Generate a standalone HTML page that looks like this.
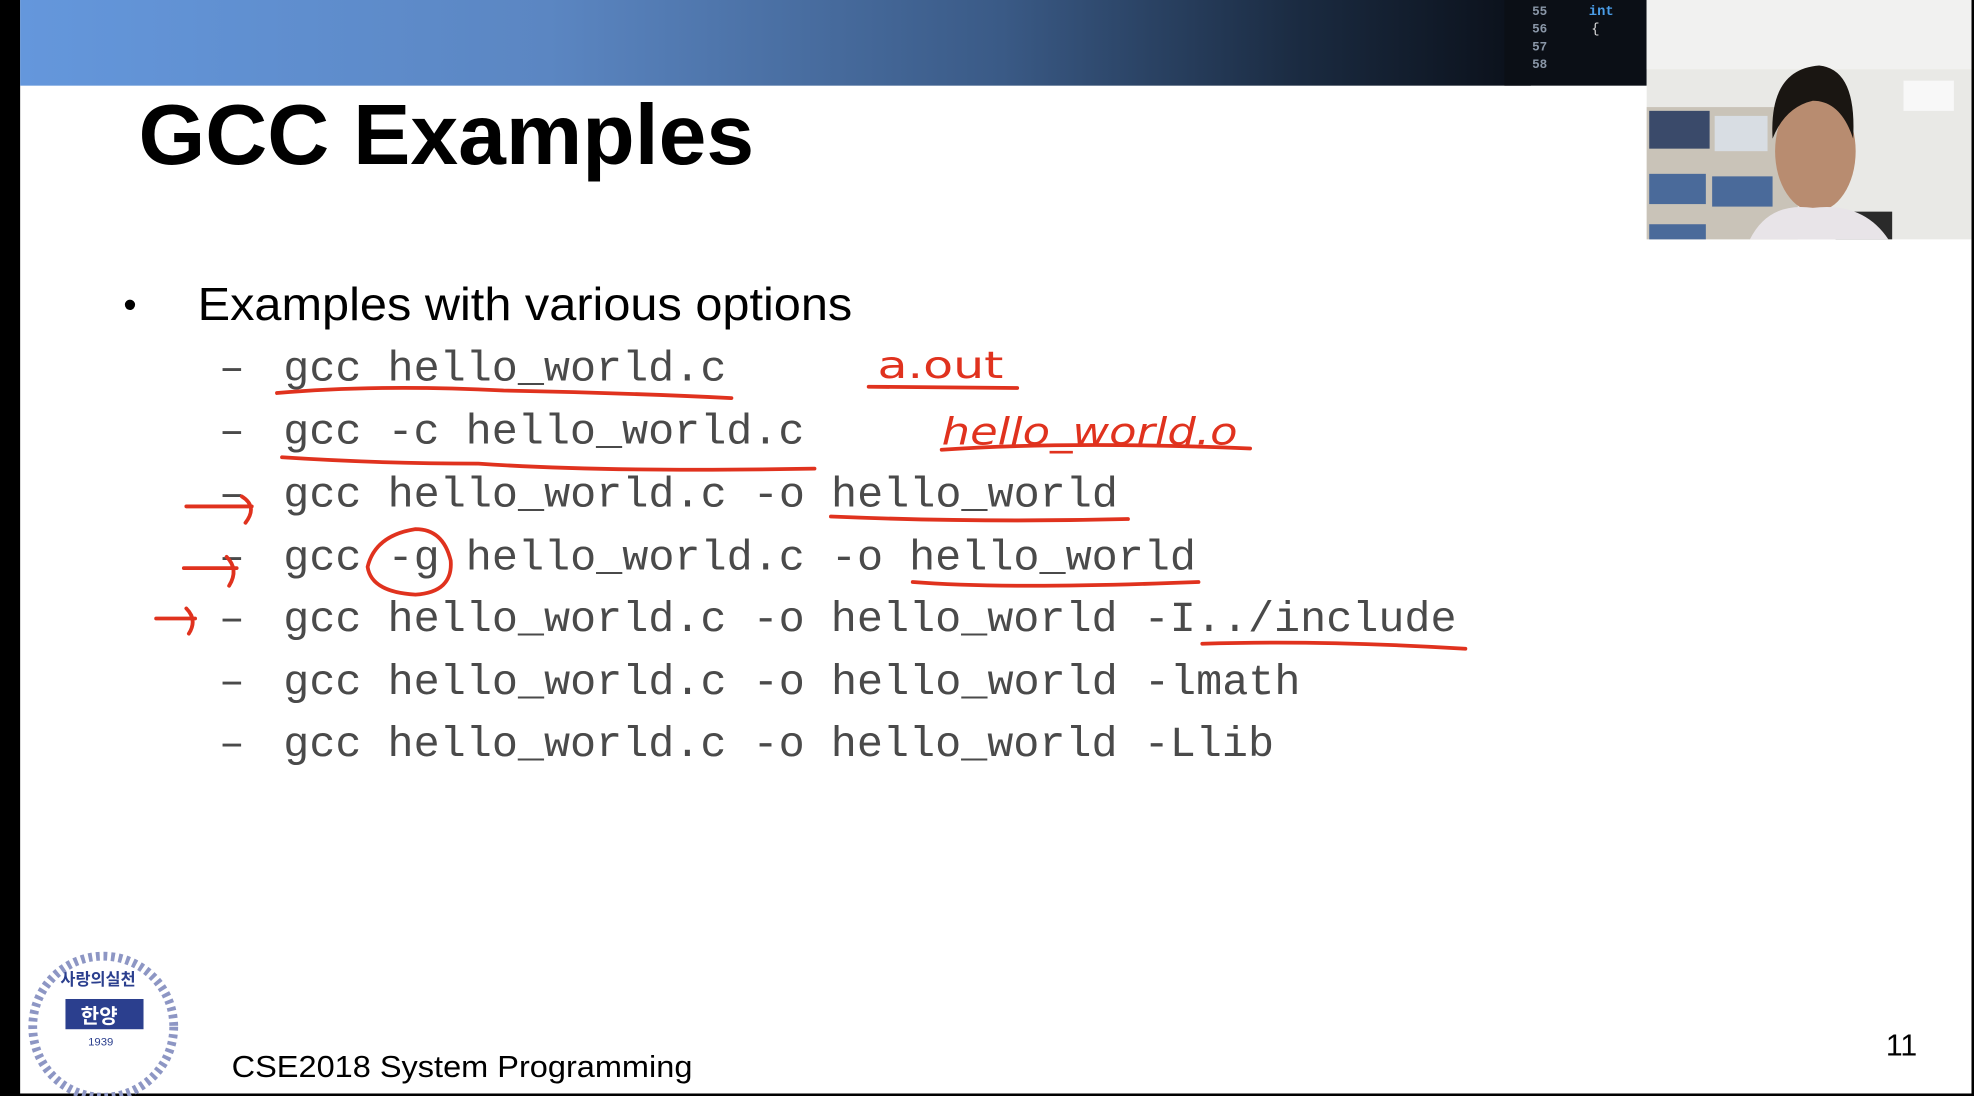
<!DOCTYPE html>
<html><head><meta charset="utf-8"><style>
html,body{margin:0;padding:0;background:#000;}
svg{display:block;}
</style></head><body>
<svg width="1974" height="1096" viewBox="0 0 1568 870" preserveAspectRatio="none" xmlns="http://www.w3.org/2000/svg">
<defs>
<linearGradient id="bar" x1="0" x2="1" y1="0" y2="0">
<stop offset="0" stop-color="#6497dc"/>
<stop offset="0.35" stop-color="#5b86c2"/>
<stop offset="0.65" stop-color="#3a5a86"/>
<stop offset="0.85" stop-color="#1a2a40"/>
<stop offset="1" stop-color="#0a0f18"/>
</linearGradient>
</defs>
<rect x="0" y="0" width="1568" height="870" fill="#000"/>
<rect x="16" y="0" width="1550" height="868" fill="#fff"/>
<rect x="16" y="0" width="1200" height="68" fill="url(#bar)"/>
<rect x="1195" y="0" width="113" height="68" fill="#0b0f16"/>
<g font-family="Liberation Mono, monospace" font-size="10" font-weight="bold" fill="#8a97a8">
<text x="1217" y="12">55</text><text x="1217" y="26">56</text><text x="1217" y="40">57</text><text x="1217" y="54">58</text>
</g>
<text x="1262" y="12" font-family="Liberation Mono, monospace" font-size="11" font-weight="bold" fill="#4a9de8">int</text>
<text x="1264" y="26" font-family="Liberation Mono, monospace" font-size="11" fill="#ddd">{</text>
<!-- webcam -->
<rect x="1308" y="0" width="258" height="190" fill="#e9e9e6"/>
<rect x="1308" y="0" width="258" height="55" fill="#f1f1f0"/>
<rect x="1308" y="85" width="120" height="105" fill="#c9c3b8"/>
<rect x="1310" y="88" width="48" height="30" fill="#3a4a6a"/>
<rect x="1310" y="138" width="45" height="24" fill="#4a6a9a"/>
<rect x="1360" y="140" width="48" height="24" fill="#4a6a9a"/>
<rect x="1310" y="178" width="45" height="12" fill="#4a6a9a"/>
<rect x="1362" y="92" width="42" height="28" fill="#d8dde3"/>
<rect x="1512" y="64" width="40" height="24" fill="#f8f8f8"/>
<rect x="1458" y="168" width="45" height="22" fill="#2a2a2a"/>
<ellipse cx="1442" cy="120" rx="32" ry="48" fill="#b88c70"/>
<path d="M1408 110 Q1405 55 1445 52 Q1475 55 1472 110 Q1462 80 1440 80 Q1418 85 1408 110Z" fill="#1a1612"/>
<path d="M1390 190 Q1405 160 1440 165 Q1480 160 1500 190Z" fill="#e8e4e8"/>
<!-- title -->
<text x="110" y="130" font-family="Liberation Sans, Arial, sans-serif" font-size="68" font-weight="bold" fill="#000" textLength="489" lengthAdjust="spacingAndGlyphs">GCC Examples</text>
<text x="98" y="252" font-family="Liberation Sans, Arial, sans-serif" font-size="30" fill="#000">•</text>
<text x="157" y="254" font-family="Liberation Sans, Arial, sans-serif" font-size="37" fill="#000" textLength="520" lengthAdjust="spacingAndGlyphs">Examples with various options</text>
<g font-family="Liberation Mono, Courier New, monospace" font-size="34" fill="#4a4a4a">
<text x="174" y="302">–</text><text x="225" y="302" textLength="352" lengthAdjust="spacingAndGlyphs">gcc hello_world.c</text>
<text x="174" y="352">–</text><text x="225" y="352" textLength="414" lengthAdjust="spacingAndGlyphs">gcc -c hello_world.c</text>
<text x="174" y="402">–</text><text x="225" y="402" textLength="663" lengthAdjust="spacingAndGlyphs">gcc hello_world.c -o hello_world</text>
<text x="174" y="452">–</text><text x="225" y="452" textLength="725" lengthAdjust="spacingAndGlyphs">gcc -g hello_world.c -o hello_world</text>
<text x="174" y="501">–</text><text x="225" y="501" textLength="932" lengthAdjust="spacingAndGlyphs">gcc hello_world.c -o hello_world -I../include</text>
<text x="174" y="551">–</text><text x="225" y="551" textLength="808" lengthAdjust="spacingAndGlyphs">gcc hello_world.c -o hello_world -lmath</text>
<text x="174" y="600">–</text><text x="225" y="600" textLength="787" lengthAdjust="spacingAndGlyphs">gcc hello_world.c -o hello_world -Llib</text>
</g>
<!-- red annotations -->
<g fill="none" stroke="#e0321e" stroke-width="3" stroke-linecap="round">
<path d="M220 312 Q300 305 400 310 Q500 312 581 316"/>
<path d="M690 307 L808 308"/>
<path d="M224 363 Q300 368 380 368 Q480 375 647 372"/>
<path d="M748 357 Q850 350 993 356"/>
<path d="M660 410 Q780 415 896 412"/>
<path d="M725 462 Q800 468 952 462"/>
<path d="M955 511 Q1050 508 1164 515"/>
<path d="M148 402 L200 402 M192 394 Q205 402 195 415"/>
<path d="M146 451 L188 451 M180 442 Q190 452 182 465"/>
<path d="M124 491 L155 491 M148 483 Q157 492 150 503"/>
<path d="M330 420 Q298 425 292 450 Q295 470 330 472 Q360 470 358 445 Q352 420 330 420Z"/>
</g>
<text x="697" y="300" font-family="DejaVu Sans, sans-serif" font-size="30" fill="#e0321e" textLength="100" lengthAdjust="spacingAndGlyphs">a.out</text>
<text x="748" y="353" font-family="DejaVu Sans, sans-serif" font-style="italic" font-size="30" fill="#e0321e" textLength="235" lengthAdjust="spacingAndGlyphs">hello_world.o</text>
<!-- logo -->
<g>
<circle cx="82" cy="815" r="56" fill="none" stroke="#8d96c4" stroke-width="7" stroke-dasharray="3 3"/>
<rect x="52" y="793" width="62" height="24" fill="#2b3f8e"/>
<text x="64" y="812" font-family="Liberation Sans, 'Noto Sans CJK KR', sans-serif" font-size="16" font-weight="bold" fill="#fff">한양</text>
<text x="70" y="830" font-family="Liberation Sans, sans-serif" font-size="9" fill="#2b3f8e">1939</text>
<text x="48" y="782" font-family="Liberation Sans, 'Noto Sans CJK KR', sans-serif" font-size="13" font-weight="bold" fill="#2b3f8e">사랑의실천</text>
</g>
<text x="184" y="855" font-family="Liberation Sans, Arial, sans-serif" font-size="24" fill="#000" textLength="366" lengthAdjust="spacingAndGlyphs">CSE2018 System Programming</text>
<text x="1498" y="838" font-family="Liberation Sans, Arial, sans-serif" font-size="24" fill="#000">11</text>
</svg>
</body></html>
